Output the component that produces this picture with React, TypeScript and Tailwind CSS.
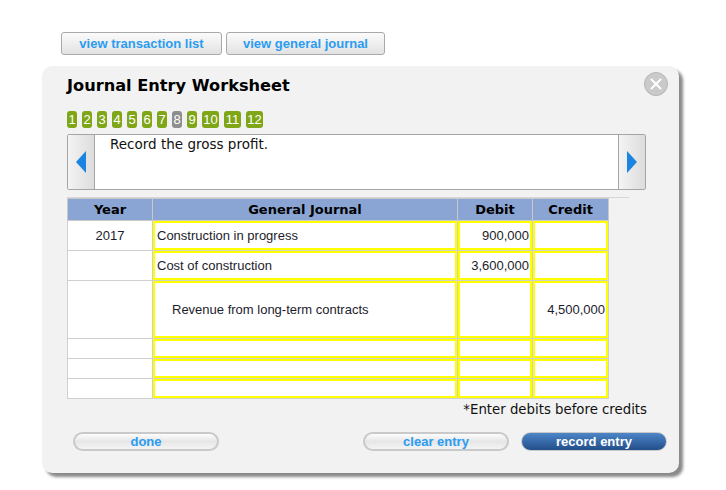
import React from "react"

const steps = [
  { n: "1" }, { n: "2" }, { n: "3" }, { n: "4" }, { n: "5" }, { n: "6" },
  { n: "7" }, { n: "8", off: true }, { n: "9" }, { n: "10" }, { n: "11" }, { n: "12" },
]

type Row = { year?: string; account?: string; indent?: boolean; debit?: string; credit?: string; h: string; inner: string }

const rows: Row[] = [
  { year: "2017", account: "Construction in progress", debit: "900,000", h: "h-[30px]", inner: "h-[29px]" },
  { account: "Cost of construction", debit: "3,600,000", h: "h-[30px]", inner: "h-[29px]" },
  { account: "Revenue from long-term contracts", indent: true, credit: "4,500,000", h: "h-[58px]", inner: "h-[57px]" },
  { h: "h-[20px]", inner: "h-[19px]" },
  { h: "h-[20px]", inner: "h-[19px]" },
  { h: "h-[20px]", inner: "h-[19px]" },
]

function TopButton({ children, w }: { children: React.ReactNode; w: string }) {
  return (
    <button
      className={`${w} h-[23px] rounded-[3px] border border-[#a9a9a9] bg-gradient-to-b from-[#fbfbfb] to-[#e2e2e2] text-[13px] font-bold text-[#2b9cf2] font-['Liberation_Sans',Arial,sans-serif]`}
    >
      {children}
    </button>
  )
}

function PillButton({ children, primary }: { children: React.ReactNode; primary?: boolean }) {
  return primary ? (
    <button className="w-[146px] h-[19px] rounded-full border border-[#c9c9c9] bg-gradient-to-b from-[#4d86c8] to-[#234f8a] text-[13px] font-bold leading-none text-white font-['Liberation_Sans',Arial,sans-serif]">
      {children}
    </button>
  ) : (
    <button className="w-[146px] h-[19px] rounded-full border-2 border-[#c9c9c9] bg-gradient-to-b from-[#fdfdfd] via-[#e6e6e6] to-[#f4f4f4] text-[13px] font-bold leading-none text-[#2b9cf2] font-['Liberation_Sans',Arial,sans-serif]">
      {children}
    </button>
  )
}

function Arrow({ dir }: { dir: "left" | "right" }) {
  return (
    <div className="w-[26px] h-full flex items-center justify-center bg-gradient-to-r from-[#f4f4f4] to-[#dcdcdc]">
      <svg width="10" height="22" viewBox="0 0 10 22">
        {dir === "left" ? (
          <polygon points="10,0 10,22 0,11" fill="#1a84e0" />
        ) : (
          <polygon points="0,0 0,22 10,11" fill="#1a84e0" />
        )}
      </svg>
    </div>
  )
}

function InputCell({ children, className, inner }: { children?: React.ReactNode; className?: string; inner: string }) {
  return (
    <td className="p-0 border border-[#cfcfcf]">
      <div className={`${inner} border-2 border-[#ffff00] flex items-center ${className ?? ""}`}>{children}</div>
    </td>
  )
}

export default function App() {
  return (
    <div className="w-[726px] h-[490px] bg-white relative font-['Liberation_Sans',Arial,sans-serif] text-[#222]">
      <div className="pt-[32px] pl-[61px] flex gap-[4px]">
        <TopButton w="w-[161px]">view transaction list</TopButton>
        <TopButton w="w-[159px]">view general journal</TopButton>
      </div>

      <div className="relative ml-[42px] mt-[11px] w-[637px] h-[407px] rounded-[10px] bg-[#f2f2f2] shadow-[4px_4px_3px_#8a8a8a] pl-[25px]">
        <div className="absolute right-[11px] top-[6px] w-[24px] h-[24px] rounded-full bg-[#cacaca] border border-[#b5b5b5] flex items-center justify-center">
          <svg width="12" height="12" viewBox="0 0 12 12">
            <path d="M1.5 1.5 L10.5 10.5 M10.5 1.5 L1.5 10.5" stroke="white" strokeWidth="2" strokeLinecap="round" />
          </svg>
        </div>

        <h1 className="pt-[10px] text-[16.2px] font-bold text-black font-['DejaVu_Sans',Verdana,sans-serif] leading-[20px]">
          Journal Entry Worksheet
        </h1>

        <div className="mt-[15px] flex gap-[5px]">
          {steps.map((s) => (
            <div
              key={s.n}
              className={`h-[17px] ${s.n.length > 1 ? "w-[17px]" : "w-[10px]"} rounded-[3px] ${s.off ? "bg-[#8e8e8e]" : "bg-[#7fa617]"} text-white text-[13px] leading-[17px] text-center font-['Liberation_Sans',Arial,sans-serif]`}
            >
              {s.n}
            </div>
          ))}
        </div>

        <div className="mt-[6px] w-[579px] h-[56px] flex border border-[#a5a5a5] rounded-[2px] bg-white overflow-hidden">
          <div className="border-r border-[#a5a5a5]">
            <Arrow dir="left" />
          </div>
          <div className="flex-1 pl-[15px] text-[13.5px] leading-[18px] font-['DejaVu_Sans',Verdana,sans-serif] text-[#111]">
            Record the gross profit.
          </div>
          <div className="border-l border-[#a5a5a5]">
            <Arrow dir="right" />
          </div>
        </div>

        <div className="mt-[7px] w-[562px] border-t border-[#d6d6d6]" />

        <table className="w-[541px] border-collapse table-fixed text-[13px] text-[#1c1c2c]">
          <colgroup>
            <col className="w-[85px]" />
            <col className="w-[305px]" />
            <col className="w-[75px]" />
            <col className="w-[76px]" />
          </colgroup>
          <thead>
            <tr className="h-[22px] bg-[#8aa5d3] text-[13px] font-bold text-black font-['DejaVu_Sans',Verdana,sans-serif]">
              <th className="border border-[#c9c9c9] font-bold">Year</th>
              <th className="border border-[#c9c9c9] font-bold">General Journal</th>
              <th className="border border-[#c9c9c9] font-bold">Debit</th>
              <th className="border border-[#c9c9c9] font-bold">Credit</th>
            </tr>
          </thead>
          <tbody className="bg-white">
            {rows.map((r, i) => (
              <tr key={i} className={r.h}>
                <td className="border border-[#cfcfcf] text-center">{r.year}</td>
                <InputCell inner={r.inner} className={r.indent ? "pl-[17px]" : "pl-[2px]"}>{r.account}</InputCell>
                <InputCell inner={r.inner} className="justify-end pr-[1px]">{r.debit}</InputCell>
                <InputCell inner={r.inner} className="justify-end pr-[1px]">{r.credit}</InputCell>
              </tr>
            ))}
          </tbody>
        </table>

        <div className="w-[580px] text-right text-[13.3px] text-[#111] mt-[1px] font-['DejaVu_Sans',Verdana,sans-serif]">
          *Enter debits before credits
        </div>

        <div className="mt-[9px] flex">
          <div className="ml-[6px]">
            <PillButton>done</PillButton>
          </div>
          <div className="ml-[144px]">
            <PillButton>clear entry</PillButton>
          </div>
          <div className="ml-[12px]">
            <PillButton primary>record entry</PillButton>
          </div>
        </div>
      </div>
    </div>
  )
}
